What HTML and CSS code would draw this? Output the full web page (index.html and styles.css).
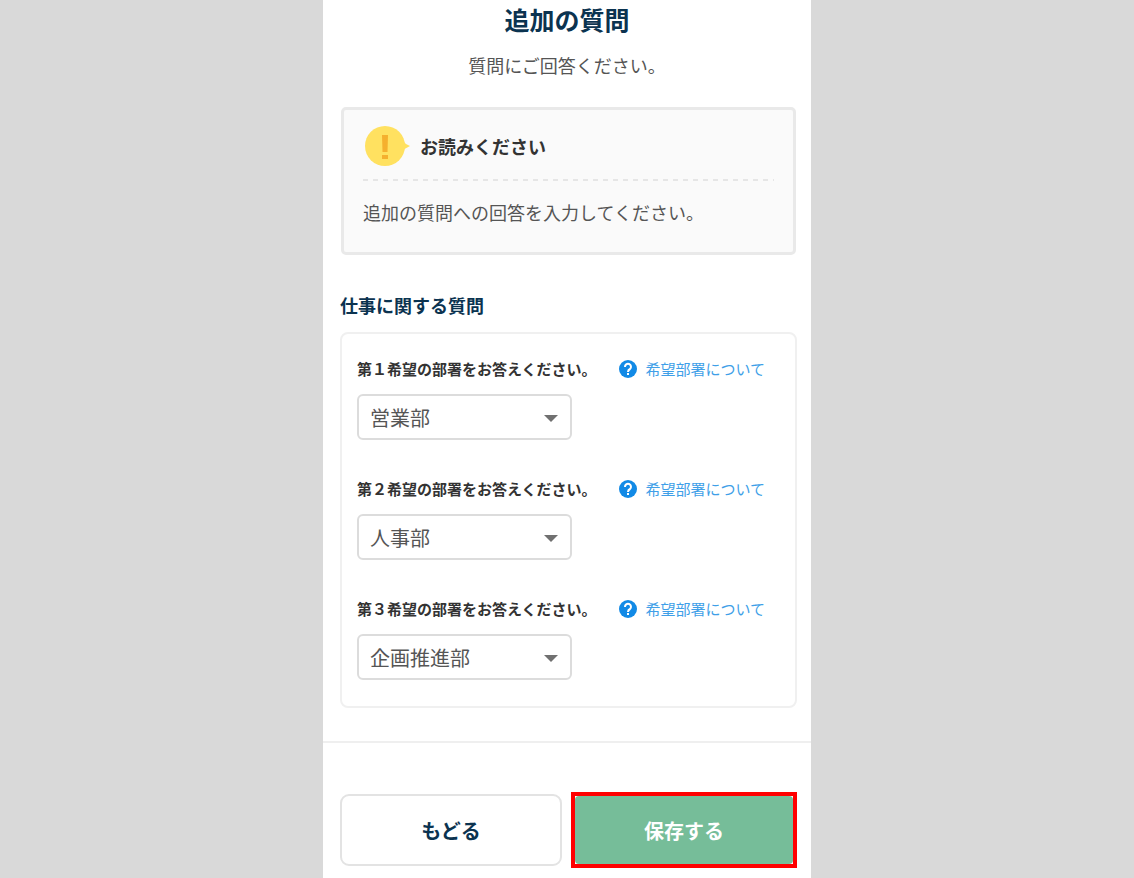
FILE: index.html
```html
<!DOCTYPE html>
<html lang="ja">
<head>
    <meta charset="UTF-8">
    <meta name="viewport" content="width=device-width, initial-scale=1.0">
    <title>追加の質問</title>
    <link rel="stylesheet" href="styles.css">
</head>
<body>
    <form class="page">
        <header class="page-header">
            <h1>追加の質問</h1>
            <p>質問にご回答ください。</p>
        </header>

        <section class="notice">
            <div class="notice-title">
                <svg class="notice-icon" viewBox="0 0 45 40" aria-hidden="true">
                    <circle cx="20" cy="20" r="20" fill="#ffe160"/>
                    <path d="M37 14 Q40 18 45 20 Q40 22 37 26z" fill="#ffe160"/>
                    <path d="M17 9h6l-.5 17h-5z M17 29h6v4h-6z" fill="#f5b02e"/>
                </svg>
                <h2>お読みください</h2>
            </div>
            <p>追加の質問への回答を入力してください。</p>
        </section>

        <section class="questions">
            <h2>仕事に関する質問</h2>
            <div class="card">
                <div class="question">
                    <div class="question-head">
                        <label for="dept1">第１希望の部署をお答えください。</label>
                        <a href="#" class="help">
                            <svg viewBox="0 0 18 18" aria-hidden="true">
                                <circle cx="9" cy="9" r="9" fill="#128ae6"/>
                                <path d="M6 7a3 3 0 1 1 5 2Q9 10 9 12" fill="none" stroke="#fff" stroke-width="2"/>
                                <rect x="8" y="13" width="2" height="2" fill="#fff"/>
                            </svg>
                            希望部署について
                        </a>
                    </div>
                    <div class="select">
                        <select id="dept1">
                            <option selected>営業部</option>
                            <option>人事部</option>
                            <option>企画推進部</option>
                        </select>
                    </div>
                </div>
                <div class="question">
                    <div class="question-head">
                        <label for="dept2">第２希望の部署をお答えください。</label>
                        <a href="#" class="help">
                            <svg viewBox="0 0 18 18" aria-hidden="true">
                                <circle cx="9" cy="9" r="9" fill="#128ae6"/>
                                <path d="M6 7a3 3 0 1 1 5 2Q9 10 9 12" fill="none" stroke="#fff" stroke-width="2"/>
                                <rect x="8" y="13" width="2" height="2" fill="#fff"/>
                            </svg>
                            希望部署について
                        </a>
                    </div>
                    <div class="select">
                        <select id="dept2">
                            <option>営業部</option>
                            <option selected>人事部</option>
                            <option>企画推進部</option>
                        </select>
                    </div>
                </div>
                <div class="question">
                    <div class="question-head">
                        <label for="dept3">第３希望の部署をお答えください。</label>
                        <a href="#" class="help">
                            <svg viewBox="0 0 18 18" aria-hidden="true">
                                <circle cx="9" cy="9" r="9" fill="#128ae6"/>
                                <path d="M6 7a3 3 0 1 1 5 2Q9 10 9 12" fill="none" stroke="#fff" stroke-width="2"/>
                                <rect x="8" y="13" width="2" height="2" fill="#fff"/>
                            </svg>
                            希望部署について
                        </a>
                    </div>
                    <div class="select">
                        <select id="dept3">
                            <option>営業部</option>
                            <option>人事部</option>
                            <option selected>企画推進部</option>
                        </select>
                    </div>
                </div>
            </div>
        </section>

        <footer class="actions">
            <button type="button" class="btn-back">もどる</button>
            <div class="highlight">
                <button type="submit" class="btn-save">保存する</button>
            </div>
        </footer>
    </form>
</body>
</html>
```
FILE: styles.css
```css
* {
    box-sizing: border-box;
}
body {
    margin: 0;
    background-color: #d9d9d9;
    color: #555;
    font-family: "Noto Sans CJK JP", sans-serif;
    font-size: 18px;
    line-height: 28px;
}
h1, h2, p {
    margin: 0;
}
h2 {
    font-size: 18px;
}
.page {
    max-width: 488px;
    min-height: 100vh;
    margin: 0 auto;
    background-color: #fff;
}
.page-header {
    padding: 1px 18px 0;
    text-align: center;
}
.page-header h1 {
    margin-bottom: 14px;
    color: #0b3350;
    font-size: 25px;
    line-height: 36px;
}
.notice {
    margin: 28px 15px 0 18px;
    padding: 16px 19px 26px;
    background-color: #fafafa;
    border: 3px solid #e9e9e9;
    border-radius: 5px;
}
.notice-title {
    display: flex;
    align-items: center;
    gap: 10px;
    margin-bottom: 17px;
    padding: 0 0 15px 2px;
    /* dashes drawn by hand, the native dashed border is too tight */
    background: repeating-linear-gradient(to right, #e6e6e6 0 5px, transparent 5px 10px) bottom / 100% 2px no-repeat;
}
.notice-title h2 {
    color: #333;
}
.notice-icon {
    width: 45px;
    height: 40px;
}
.questions {
    margin: 36px 14px 0 17px;
}
.questions h2 {
    margin-bottom: 13px;
    color: #0b3350;
}
.card {
    display: flex;
    flex-direction: column;
    gap: 37px;
    padding: 23px 15px 26px;
    border: 2px solid #f0f0f0;
    border-radius: 8px;
}
.question-head {
    display: flex;
    flex-wrap: wrap;
    align-items: center;
    justify-content: space-between;
    margin-bottom: 13px;
    padding-right: 15px;
    font-size: 15px;
    line-height: 24px;
}
.question-head label {
    color: #333;
    font-weight: bold;
}
.help {
    display: flex;
    align-items: center;
    gap: 8px;
    color: #3f9fe8;
    text-decoration: none;
}
.help svg {
    width: 18px;
    height: 18px;
}
.select {
    position: relative;
    max-width: 215px;
}
.select select {
    display: block;
    width: 100%;
    height: 46px;
    padding: 0 40px 0 11px;
    appearance: none;
    background-color: #fff;
    border: 2px solid #dcdcdc;
    border-radius: 6px;
    color: #555;
    font-family: inherit;
    font-size: 20px;
}
.select::after {
    content: "";
    position: absolute;
    top: 21px;
    right: 14px;
    border: 7px solid transparent;
    border-top-color: #707070;
    border-bottom: 0;
    pointer-events: none;
}
.actions {
    display: flex;
    align-items: center;
    gap: 9px;
    margin-top: 33px;
    padding: 49px 14px 11px 17px;
    border-top: 2px solid #efefef;
}
.actions button {
    padding: 0;
    font-family: inherit;
    font-size: 20px;
    font-weight: bold;
    cursor: pointer;
}
.btn-back {
    flex: 1;
    height: 72px;
    background-color: #fff;
    border: 2px solid #e3e3e3;
    border-radius: 9px;
    color: #0b3350;
}
.highlight {
    flex: 1;
    border: 4px solid #f00;
}
.btn-save {
    display: block;
    width: 100%;
    height: 68px;
    background-color: #76bd99;
    border: none;
    border-radius: 4px;
    color: #fff;
}
```
